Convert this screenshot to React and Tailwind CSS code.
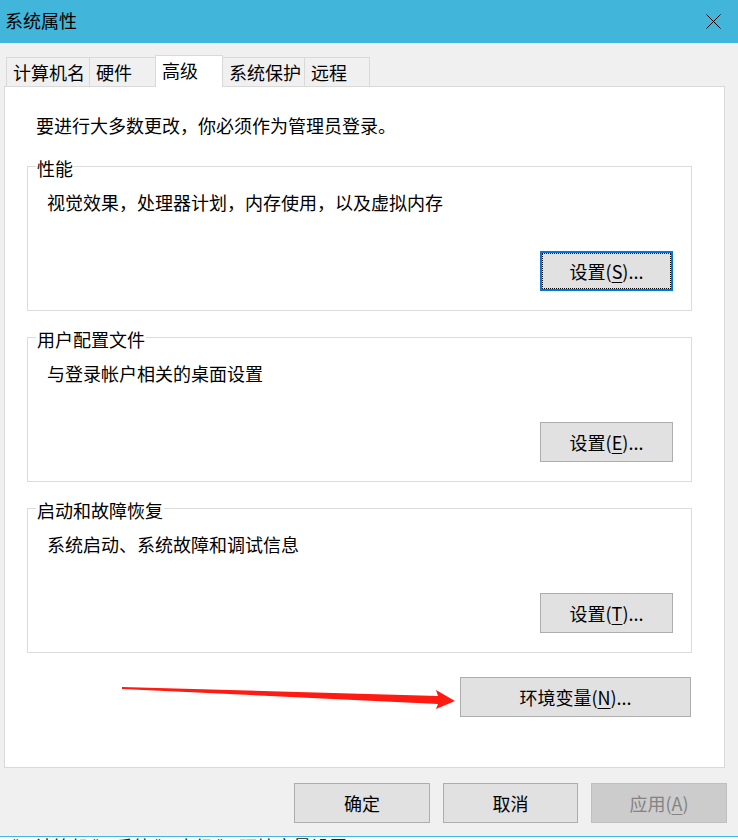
import React from 'react';

const font = "font-['Microsoft_YaHei_UI','Noto_Sans_CJK_SC',sans-serif]";

const Btn = ({ children, className = '', focused = false, disabled = false }) => (
  <button
    className={`relative flex items-center justify-center text-[18px] leading-[24px] ${
      disabled
        ? 'bg-[#cccccc] border border-[#bfbfbf] text-[#838383]'
        : focused
        ? 'bg-[#e1e1e1] border-2 border-[#0078d7] text-black'
        : 'bg-[#e1e1e1] border border-[#adadad] text-black'
    } ${className}`}
  >
    {focused && <span className="pointer-events-none absolute inset-0 border border-dotted border-black" />}
    {children}
  </button>
);

const Group = ({ title, desc, children }) => (
  <div className="relative flex h-[145px] flex-col border border-[#dcdcdc]">
    <span className="absolute left-[8px] top-[-11px] bg-white px-[1px] leading-[24px]">{title}</span>
    <div className="pl-[19px] pt-[23px] leading-[24px]">{desc}</div>
    <div className="mt-[37px] mr-[18px] self-end">{children}</div>
  </div>
);

const U = ({ children }) => <span className="underline underline-offset-[3px] decoration-1">{children}</span>;

const tabs = [
  { label: '计算机名', cls: 'w-[83px] border-l border-t' },
  { label: '硬件', cls: 'w-[66px] border-l border-t' },
  { label: '高级', active: true },
  { label: '系统保护', cls: 'w-[82px] border-r border-t' },
  { label: '远程', cls: 'w-[65px] border-r border-t' },
];

export default function App() {
  return (
    <div className={`relative h-[840px] w-[738px] overflow-hidden bg-[#f0f0f0] text-[18px] text-black ${font}`}>
      {/* Title bar */}
      <div className="flex h-[43px] items-center justify-between bg-[#41b6da] pl-[5px] pr-[17px] pb-[3px]">
        <span className="leading-[24px]">系统属性</span>
        <svg width="15" height="15" viewBox="0 0 15 15" className="mt-[3px]">
          <path d="M0.5 0.5 L14.5 14.5 M14.5 0.5 L0.5 14.5" stroke="#000" strokeWidth="1" fill="none" />
        </svg>
      </div>

      {/* Tabs */}
      <div className="mt-[12px] flex h-[31px] items-end pl-[6px]">
        {tabs.map((t) =>
          t.active ? (
            <div
              key={t.label}
              className="relative z-10 -mb-[1px] flex h-[32px] w-[68px] items-center border-x border-t border-[#d9d9d9] bg-white pl-[6px] pb-[3px] leading-[24px]"
            >
              {t.label}
            </div>
          ) : (
            <div
              key={t.label}
              className={`flex h-[29px] items-center border-[#d9d9d9] bg-[#f0f0f0] pl-[6px] leading-[24px] ${t.cls}`}
            >
              {t.label}
            </div>
          )
        )}
      </div>

      {/* Panel */}
      <div className="ml-[4px] h-[682px] w-[721px] border border-[#d9d9d9] bg-white pl-[22px] pr-[32px] pt-[26px]">
        <div className="pl-[9px] leading-[24px]">要进行大多数更改，你必须作为管理员登录。</div>

        <div className="mt-[29px] flex flex-col gap-[26px]">
          <Group title="性能" desc="视觉效果，处理器计划，内存使用，以及虚拟内存">
            <Btn focused className="h-[40px] w-[133px]">
              设置(<U>S</U>)...
            </Btn>
          </Group>
          <Group title="用户配置文件" desc="与登录帐户相关的桌面设置">
            <Btn className="h-[40px] w-[133px]">
              设置(<U>E</U>)...
            </Btn>
          </Group>
          <Group title="启动和故障恢复" desc="系统启动、系统故障和调试信息">
            <Btn className="h-[40px] w-[133px]">
              设置(<U>T</U>)...
            </Btn>
          </Group>
        </div>

        <div className="mt-[24px] flex justify-end pr-[1px]">
          <Btn className="h-[40px] w-[231px]">
            环境变量(<U>N</U>)...
          </Btn>
        </div>
      </div>

      {/* Bottom buttons */}
      <div className="mt-[15px] flex justify-end gap-[13px] pr-[11px]">
        <Btn className="h-[40px] w-[136px]">确定</Btn>
        <Btn className="h-[40px] w-[135px]">取消</Btn>
        <Btn disabled className="h-[40px] w-[136px]">
          应用(<U>A</U>)
        </Btn>
      </div>

      {/* Window below, clipped */}
      <div className="mt-[13px] h-[1px] bg-[#41b6da]" />
      <div className="h-[4px] overflow-hidden bg-white pl-[13px]">
        <div className="-mt-[3px] whitespace-nowrap leading-[24px] text-[#222]">》 计算机 》 系统 》 高级 》 环境变量设置</div>
      </div>

      {/* Red annotation arrow */}
      <svg className="pointer-events-none absolute left-0 top-0" width="738" height="840" viewBox="0 0 738 840">
        <polygon
          points="122,687 438,696 436,690 455,701 436,709 438,704 122,689"
          fill="#ff1a12"
        />
      </svg>
    </div>
  );
}
